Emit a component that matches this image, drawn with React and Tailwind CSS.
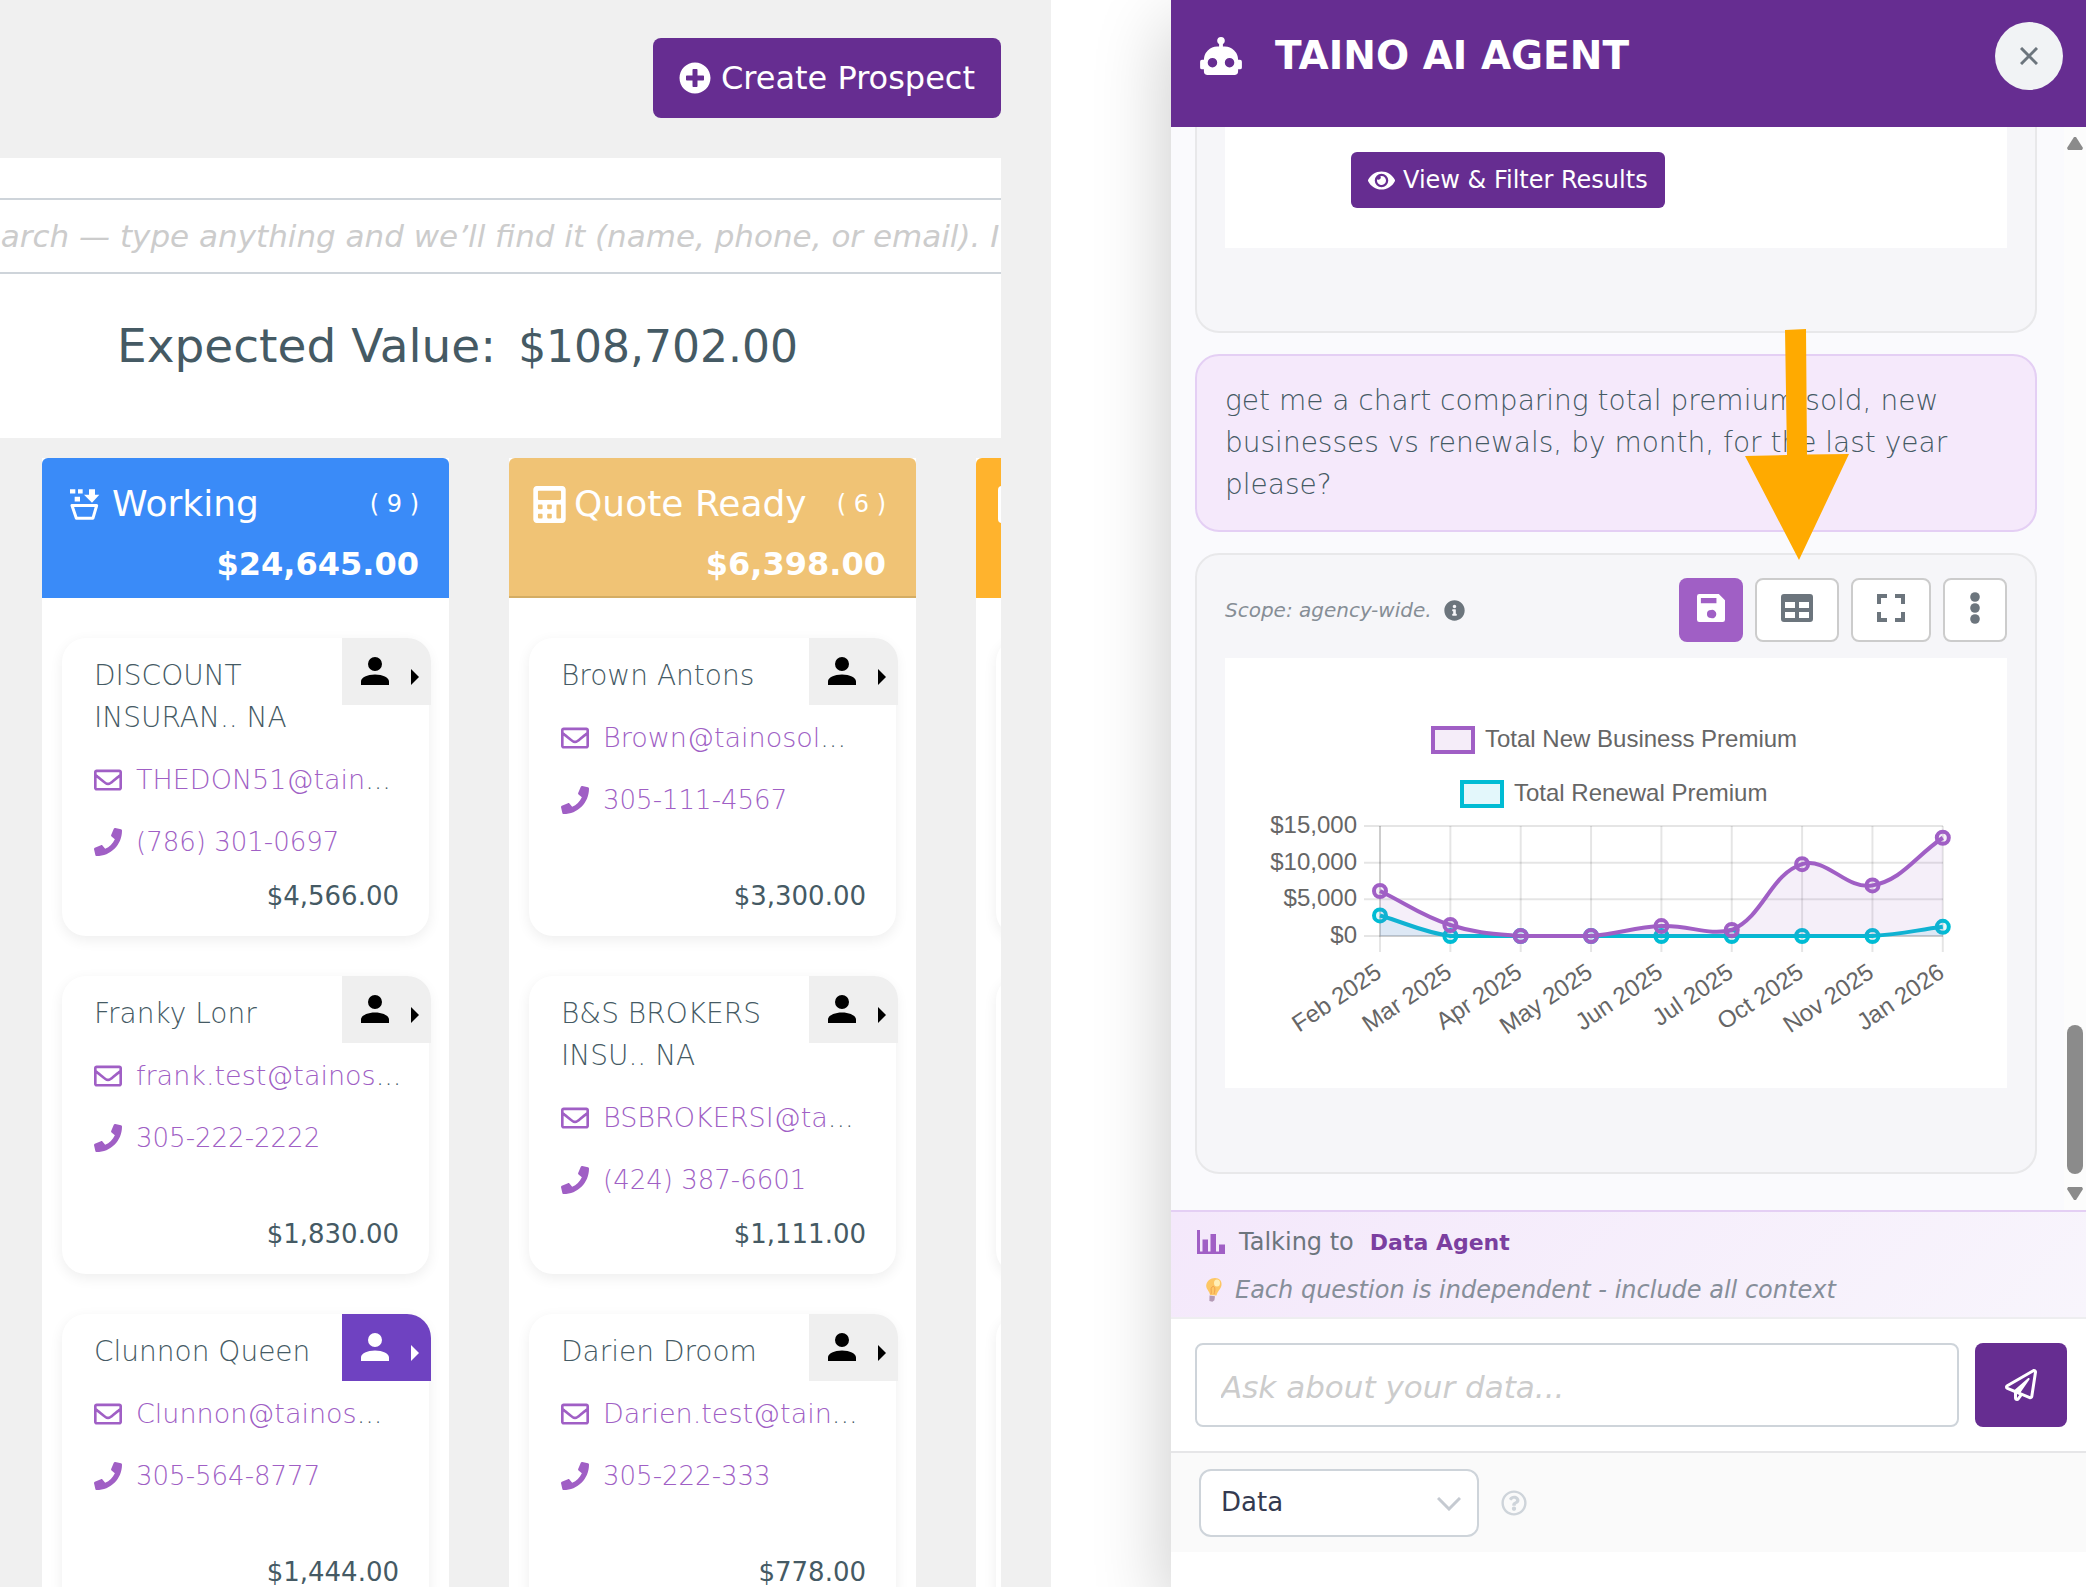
import React, { useState } from 'react';
import {
  FaPlusCircle,
  FaCalculator,
  FaRegEnvelope,
  FaPhone,
  FaRegPaperPlane,
  FaEye,
  FaInfoCircle,
  FaRegQuestionCircle,
} from 'react-icons/fa';

const RobotIcon = () => (
  <svg viewBox="1 2 22 20" fill="currentColor" className="w-[42px] h-[38px]">
    <path d="M12 2a2 2 0 0 1 2 2c0 .74-.4 1.39-1 1.73V7h1a7 7 0 0 1 7 7h1a1 1 0 0 1 1 1v3a1 1 0 0 1-1 1h-1v1a2 2 0 0 1-2 2H5a2 2 0 0 1-2-2v-1H2a1 1 0 0 1-1-1v-3a1 1 0 0 1 1-1h1a7 7 0 0 1 7-7h1V5.73c-.6-.34-1-.99-1-1.73a2 2 0 0 1 2-2M7.5 13a2.5 2.5 0 1 0 0 5 2.5 2.5 0 0 0 0-5m9 0a2.5 2.5 0 1 0 0 5 2.5 2.5 0 0 0 0-5" />
  </svg>
);

const UserIcon = () => (
  <svg viewBox="4 4 16 16" fill="currentColor" className="size-7">
    <path d="M12 4a4 4 0 1 1 0 8 4 4 0 0 1 0-8m0 10c4.42 0 8 1.79 8 4v2H4v-2c0-2.21 3.58-4 8-4" />
  </svg>
);

const BasketIcon = () => (
  <svg viewBox="0 0 90 92" fill="currentColor" className="mx-[6px] w-[30px] h-[31px]">
    <path d="M0 0h16v13H0zM24 0h14v13H24zM14 23h16v14H14zM57 0h18v17h13L66 41 42 17h15z" />
    <path d="M6 49h74l-11 38H19z" fill="none" stroke="currentColor" strokeWidth="9" strokeLinejoin="round" />
  </svg>
);

const FileIcon = () => (
  <svg viewBox="0 0 32 37" fill="currentColor" className="w-8 h-[37px]">
    <path d="M4 0h16v10h12v23a4 4 0 0 1-4 4H4a4 4 0 0 1-4-4V4a4 4 0 0 1 4-4M22 0l10 8H22z" />
  </svg>
);

const SaveIcon = () => (
  <svg viewBox="3 3 18 18" fill="currentColor" className="size-7">
    <path d="M15.5 9V5.5h-10V9zM12 18.5a2.7 2.7 0 1 0 0-5.2 2.6 2.6 0 0 0 0 5.2M17 3l4 4v12.5a1.5 1.5 0 0 1-1.5 1.5h-15A1.5 1.5 0 0 1 3 19.500V4.500A1.500 1.500 0 0 1 4.500 3z" fillRule="evenodd" />
  </svg>
);

const TableIcon = () => (
  <svg viewBox="0 0 32 28" fill="currentColor" className="w-8 h-7">
    <path d="M3 0h26a3 3 0 0 1 3 3v22a3 3 0 0 1-3 3H3a3 3 0 0 1-3-3V3a3 3 0 0 1 3-3M4 8v6h10V8zm14 0v6h10V8zM4 18v6h10v-6zm14 0v6h10v-6z" fillRule="evenodd" />
  </svg>
);

const ExpandIcon = () => (
  <svg viewBox="0 0 28 28" fill="none" stroke="currentColor" strokeWidth="4" className="size-7">
    <path d="M2 10V2h8M18 2h8v8M26 18v8h-8M10 26H2v-8" />
  </svg>
);

const DotsIcon = () => (
  <svg viewBox="0 0 10 32" fill="currentColor" className="w-[10px] h-8">
    <circle cx="5" cy="5" r="4.800" />
    <circle cx="5" cy="16" r="4.800" />
    <circle cx="5" cy="27" r="4.800" />
  </svg>
);

const StatsIcon = () => (
  <svg viewBox="0 0 28 24" fill="currentColor" className="w-7 h-6">
    <path d="M0 0h3v21.500h2.500V9.500H11v12h2.500V4H19v17.500h3v-7h6V24H0z" />
  </svg>
);

const BulbIcon = () => (
  <svg viewBox="0 0 18 24" className="w-[18px] h-6">
    <path d="M10 0c4.500 0 7 3 6.500 7-.5 4-4 6-5 10.500L5 17C4.500 13 1 11 1.200 7.500 1.500 3 5.500 0 10 0z" fill="#fdc765" />
    <ellipse cx="12" cy="5" rx="3" ry="3.500" fill="#fff0b8" />
    <path d="M6 16c1-3-1-5 1-7s4 1 2 7" fill="none" stroke="#f0a04c" strokeWidth="1" />
    <path d="M4.500 17.500l5.500.7-.6 4-2 1.600-3-.8z" fill="#b39ab5" />
  </svg>
);

const columns = [
  {
    title: 'Working',
    count: 9,
    total: '$24,645.00',
    icon: <BasketIcon />,
    header: 'bg-[#3a8bf8] border-[#3a8bf8]',
    cards: [
      { name: 'DISCOUNT INSURAN.. NA', email: 'THEDON51@tain', phone: '(786) 301-0697', value: '$4,566.00' },
      { name: 'Franky Lonr', email: 'frank.test@tainos', phone: '305-222-2222', value: '$1,830.00' },
      { name: 'Clunnon Queen', email: 'Clunnon@tainos', phone: '305-564-8777', value: '$1,444.00', active: true },
    ],
  },
  {
    title: 'Quote Ready',
    count: 6,
    total: '$6,398.00',
    icon: <FaCalculator size={37} />,
    header: 'bg-[#f0c375] border-[#d4ad64]',
    cards: [
      { name: 'Brown Antons', email: 'Brown@tainosol', phone: '305-111-4567', value: '$3,300.00' },
      { name: 'B&S BROKERS INSU.. NA', email: 'BSBROKERSI@ta', phone: '(424) 387-6601', value: '$1,111.00' },
      { name: 'Darien Droom', email: 'Darien.test@tain', phone: '305-222-333', value: '$778.00' },
    ],
  },
  {
    icon: <FileIcon />,
    header: 'bg-[#ffb32d] border-[#ffb32d]',
    cards: [{}, {}, {}],
  },
];

const ProspectCard = ({ card }) => (
  <article className="relative flex flex-col h-[298px] shrink-0 rounded-3xl bg-white pt-[17px] pb-5 pl-8 pr-[30px] shadow-[0_4px_14px_rgba(0,0,0,0.07)]">
    {card.name && (
      <>
        <button
          aria-label="Assigned user"
          className={`absolute top-0 -right-[2px] w-[89px] h-[67px] rounded-tr-3xl flex items-center pl-[19px] pb-px ${
            card.active ? 'bg-[#6f42c1] text-white' : 'bg-[#efefef] text-black'
          }`}
        >
          <UserIcon />
          <svg viewBox="0 0 8 16" fill="currentColor" className="ml-[22px] mt-3 w-2 h-4">
            <path d="M0 0l8 8-8 8z" />
          </svg>
        </button>
        <h3 className="w-[230px] text-[28px] leading-[42px] font-light">{card.name}</h3>
        <div className="mt-5 flex items-center gap-[14px] text-[27px] leading-[42px] font-light whitespace-nowrap">
          <FaRegEnvelope size={28} className="shrink-0 text-[#a05fc5]" />
          <span>
            <a href="#" className="text-[#a05fc5]">{card.email}</a>...
          </span>
        </div>
        <div className="mt-5 flex items-center gap-[14px] text-[26px] leading-[42px] font-light whitespace-nowrap text-[#a05fc5]">
          <FaPhone size={28} className="shrink-0" />
          <a href="#">{card.phone}</a>
        </div>
        <p className="mt-auto text-right text-[26px] leading-[40px]">{card.value}</p>
      </>
    )}
  </article>
);

const Column = ({ column }) => (
  <section className="w-[407px] shrink-0 bg-white">
    <header className={`h-[140px] rounded-t-md border-b-2 pt-[18px] pl-[22px] pr-[30px] text-white ${column.header}`}>
      <div className="flex items-center h-14">
        <span className="mr-[6px] shrink-0">{column.icon}</span>
        <h2 className="text-[36px] whitespace-nowrap">{column.title}</h2>
        {column.count && <span className="ml-auto text-[24px] whitespace-nowrap">( {column.count} )</span>}
      </div>
      <p className="text-right text-[32px] leading-[64px] font-bold">{column.total}</p>
    </header>
    <div className="flex flex-col gap-10 px-5 pt-10">
      {column.cards.map((card, i) => (
        <ProspectCard key={i} card={card} />
      ))}
    </div>
  </section>
);

/* Chart */
const months = ['Feb 2025', 'Mar 2025', 'Apr 2025', 'May 2025', 'Jun 2025', 'Jul 2025', 'Oct 2025', 'Nov 2025', 'Jan 2026'];
const newBusiness = [6140, 1500, 0, 0, 1350, 820, 9800, 6900, 13400];
const renewals = [2800, 0, 0, 0, 0, 0, 0, 0, 1250];
const ticks = [
  { value: 15000, label: '$15,000' },
  { value: 10000, label: '$10,000' },
  { value: 5000, label: '$5,000' },
  { value: 0, label: '$0' },
];

const TOP = 168;
const BOTTOM = 278;
const xAt = (i) => 155 + i * 70.35;
const yAt = (v) => BOTTOM - (v / 15000) * (BOTTOM - TOP);

const smoothPath = (values) => {
  const pts = values.map((v, i) => [xAt(i), yAt(v)]);
  const clamp = (y) => Math.min(BOTTOM, Math.max(TOP, y));
  const controls = pts.map((cur, i) => {
    const prev = pts[i - 1] || cur;
    const next = pts[i + 1] || cur;
    const d01 = Math.hypot(cur[0] - prev[0], cur[1] - prev[1]);
    const d12 = Math.hypot(next[0] - cur[0], next[1] - cur[1]);
    const a = (0.4 * d01) / (d01 + d12);
    const b = (0.4 * d12) / (d01 + d12);
    const dx = next[0] - prev[0];
    const dy = next[1] - prev[1];
    return {
      before: [cur[0] - a * dx, clamp(cur[1] - a * dy)],
      after: [cur[0] + b * dx, clamp(cur[1] + b * dy)],
    };
  });
  return pts
    .map((p, i) => (i === 0 ? `M${p}` : `C${controls[i - 1].after} ${controls[i].before} ${p}`))
    .join(' ');
};

const Series = ({ values, color, fill }) => {
  const path = smoothPath(values);
  return (
    <g>
      <path d={`${path} L${xAt(values.length - 1)},${BOTTOM} L${xAt(0)},${BOTTOM}Z`} fill={fill} />
      <path d={path} fill="none" stroke={color} strokeWidth="4" />
      {values.map((v, i) => (
        <circle key={i} cx={xAt(i)} cy={yAt(v)} r="6" fill={fill} stroke={color} strokeWidth="4" />
      ))}
    </g>
  );
};

const PremiumChart = () => (
  <svg viewBox="0 0 782 430" className="block w-full h-auto bg-white font-['Liberation_Sans',sans-serif] text-[24px]" fill="#666">
    <rect x="208" y="70" width="40" height="24" fill="#f5edf9" stroke="#a05fc5" strokeWidth="4" />
    <text x="260" y="89">Total New Business Premium</text>
    <rect x="237" y="124" width="40" height="24" fill="#e3f7fb" stroke="#00bcd4" strokeWidth="4" />
    <text x="289" y="143">Total Renewal Premium</text>
    {ticks.map((t) => (
      <g key={t.label}>
        <path d={`M139 ${yAt(t.value)}H718`} stroke="#000" strokeOpacity="0.1" strokeWidth="2" />
        <text x="132" y={yAt(t.value) + 7} textAnchor="end">{t.label}</text>
      </g>
    ))}
    {months.map((m, i) => (
      <g key={m}>
        <path d={`M${xAt(i)} ${TOP}V294`} stroke="#000" strokeOpacity="0.1" strokeWidth="2" />
        <text x={xAt(i) + 3} y="318" textAnchor="end" transform={`rotate(-34 ${xAt(i) + 3} 318)`}>{m}</text>
      </g>
    ))}
    <path d={`M155 ${TOP}V${BOTTOM}H718`} fill="none" stroke="#000" strokeOpacity="0.1" strokeWidth="2" />
    <Series values={renewals} color="#00bcd4" fill="rgba(0,188,212,0.1)" />
    <Series values={newBusiness} color="#a05fc5" fill="rgba(160,95,197,0.1)" />
  </svg>
);

const toolButton = 'h-16 rounded-lg border-2 border-[#ccc] bg-white text-[#6c757d] flex items-center justify-center pb-1';

const AgentPanel = () => {
  const [agent, setAgent] = useState('data');

  return (
    <aside className="relative w-[915px] shrink-0 flex flex-col bg-white shadow-[-4px_24px_70px_rgba(0,0,0,0.2)]">
      <header className="h-[127px] shrink-0 bg-[#662d91] text-white flex items-start pt-[22px] pl-[29px] pr-[23px]">
        <div className="flex items-center h-[68px]">
          <RobotIcon />
          <h1 className="ml-[33px] text-[39px] font-bold whitespace-nowrap">TAINO AI AGENT</h1>
        </div>
        <button aria-label="Close" className="ml-auto size-[68px] rounded-full bg-[#f1f3f5] text-[#6c757d] flex items-center justify-center">
          <svg viewBox="0 0 18 18" fill="none" stroke="currentColor" strokeWidth="3" className="size-[18px]">
            <path d="M1 1l16 16M17 1L1 17" />
          </svg>
        </button>
      </header>

      {/* Conversation */}
      <div className="flex-1 min-h-0 flex overflow-hidden bg-[#fafafd]">
        <div className="flex-1 flex flex-col justify-end gap-[21px] pl-6 pr-[27px] pb-9">
          <div className="shrink-0 rounded-3xl border-2 border-[#e8e8ea] bg-[#f6f6f9] px-7 pt-6 pb-[83px]">
            <div className="bg-white pt-20 pb-10">
              <button className="ml-[126px] h-14 px-[17px] rounded-md bg-[#662d91] text-white text-[24px] flex items-center gap-2 whitespace-nowrap">
                <FaEye className="text-[27px]" />
                View &amp; Filter Results
              </button>
            </div>
          </div>

          <div className="shrink-0 rounded-3xl border-2 border-[#e4cff4] bg-[#f5e9fb] px-7 py-6">
            <p className="text-[28px] leading-[42px] font-light">
              get me a chart comparing total premium sold, new businesses vs renewals, by month, for the last year please?
            </p>
          </div>

          <div className="shrink-0 rounded-3xl border-2 border-[#e8e8ea] bg-[#f6f6f9] px-7 pt-[23px] pb-[84px]">
            <div className="flex items-center gap-3 mb-4">
              <span className="text-[20px] font-light italic text-[#868e96]">Scope: agency-wide.</span>
              <FaInfoCircle className="text-[21px] text-[#6c757d]" />
              <button aria-label="Save" className="ml-auto w-16 h-16 rounded-lg bg-[#a05fc5] text-white flex items-center justify-center pb-1">
                <SaveIcon />
              </button>
              <button aria-label="Table view" className={`w-21 ${toolButton}`}><TableIcon /></button>
              <button aria-label="Full screen" className={`w-20 ${toolButton}`}><ExpandIcon /></button>
              <button aria-label="More" className={`w-16 ${toolButton}`}><DotsIcon /></button>
            </div>
            <PremiumChart />
          </div>
        </div>

        {/* Scrollbar */}
        <div className="w-[22px] flex flex-col items-center pt-2 pb-2 text-[#8b8b8b] bg-[#fcfcfc]">
          <svg viewBox="0 0 18 16" fill="currentColor" className="w-[18px] h-4"><path d="M8 2h2l7 11-1 2H2l-1-2z" /></svg>
          <div className="mt-auto w-4 h-[149px] rounded-full bg-[#8b8b8b]" />
          <svg viewBox="0 0 18 16" fill="currentColor" className="mt-3 w-[18px] h-4"><path d="M8 14h2l7-11-1-2H2L1 3z" /></svg>
        </div>
      </div>

      <div className="h-[109px] shrink-0 border-t-2 border-b-2 border-t-[#e4cff4] border-b-[#eeeef0] bg-linear-135 from-[#f4e8fb] to-[#f8f5fc] pl-[26px] pt-[6px]">
        <div className="flex items-center h-12 text-[24px] text-[#6c757d]">
          <span className="text-[#a05fc5]"><StatsIcon /></span>
          <span className="ml-[14px]">Talking to</span>
          <strong className="ml-4 text-[22px] text-[#7b3fa0]">Data Agent</strong>
        </div>
        <div className="flex items-center h-12 gap-3 pl-2 text-[24px] italic text-[#868e99]">
          <BulbIcon />
          <span>Each question is independent - include all context</span>
        </div>
      </div>

      <form className="flex gap-4 pt-6 pb-6 pl-6 pr-[19px]" onSubmit={(e) => e.preventDefault()}>
        <input
          type="text"
          aria-label="Ask about your data"
          placeholder="Ask about your data..."
          className="flex-1 min-w-0 h-21 rounded-lg border-2 border-[#ced4da] pl-6 pt-1 text-[31px] placeholder:italic placeholder:text-[#ccc]"
        />
        <button aria-label="Send" className="w-[92px] h-21 rounded-lg bg-[#662d91] text-white flex items-center justify-center">
          <FaRegPaperPlane size={32} />
        </button>
      </form>

      <div className="h-[101px] shrink-0 mb-[35px] border-t-2 border-[#e6e6e8] bg-[#fafafa] pl-7 flex items-center gap-[22px]">
        <div className="relative w-[280px]">
          <select
            aria-label="Agent"
            value={agent}
            onChange={(e) => setAgent(e.target.value)}
            className="w-full h-[68px] appearance-none rounded-xl border-2 border-[#ced4da] bg-white pl-5 text-[26px] text-[#343a50]"
          >
            <option value="data">Data</option>
          </select>
          <svg viewBox="0 0 24 14" fill="none" stroke="#c5cad1" strokeWidth="3" className="absolute right-[18px] top-7 w-6 h-[14px] pointer-events-none">
            <path d="M1 1l11 11L23 1" />
          </svg>
        </div>
        <FaRegQuestionCircle size={26} className="text-[#ced4da]" />
      </div>

      {/* Pointer to the table button */}
      <svg viewBox="0 0 104 231" fill="#ffaa00" className="absolute top-[329px] right-[237px] w-[104px] h-[231px] pointer-events-none">
        <path d="M40 1l21-1 1 125.500 42-.5-50 106L0 127l42-1z" />
      </svg>
    </aside>
  );
};

const App = () => {
  const [search, setSearch] = useState('');

  return (
    <div className="h-screen flex overflow-hidden bg-white font-['DejaVu_Sans',sans-serif] text-[#455a64]">
      <main className="flex-1 min-w-0 pr-[120px]">
        <div className="h-full bg-[#f0f0f0] pr-[50px] overflow-hidden">
          <div className="h-[158px] flex justify-end pt-[38px]">
            <button className="h-20 px-[26px] rounded-lg bg-[#662d91] text-white text-[32px] flex items-center gap-[10px] whitespace-nowrap">
              <FaPlusCircle />
              Create Prospect
            </button>
          </div>

          <div className="h-[280px] overflow-hidden bg-white pt-10">
            <input
              type="text"
              aria-label="Search"
              value={search}
              onChange={(e) => setSearch(e.target.value)}
              placeholder="Search — type anything and we’ll find it (name, phone, or email). It"
              className="block -ml-16 w-[1200px] h-[76px] border-2 border-[#ced4da] px-6 text-[31px] placeholder:italic placeholder:text-[#ccc]"
            />
            <p className="mt-9 flex items-baseline gap-[22px] pl-[117px] leading-[72px] whitespace-nowrap">
              <span className="text-[47px]">Expected Value:</span>
              <span className="text-[44px]">$108,702.00</span>
            </p>
          </div>

          <div className="mt-5 flex gap-[60px] pl-[42px] overflow-hidden">
            {columns.map((column, i) => (
              <Column key={i} column={column} />
            ))}
          </div>
        </div>
      </main>
      <AgentPanel />
    </div>
  );
};

export default App;
